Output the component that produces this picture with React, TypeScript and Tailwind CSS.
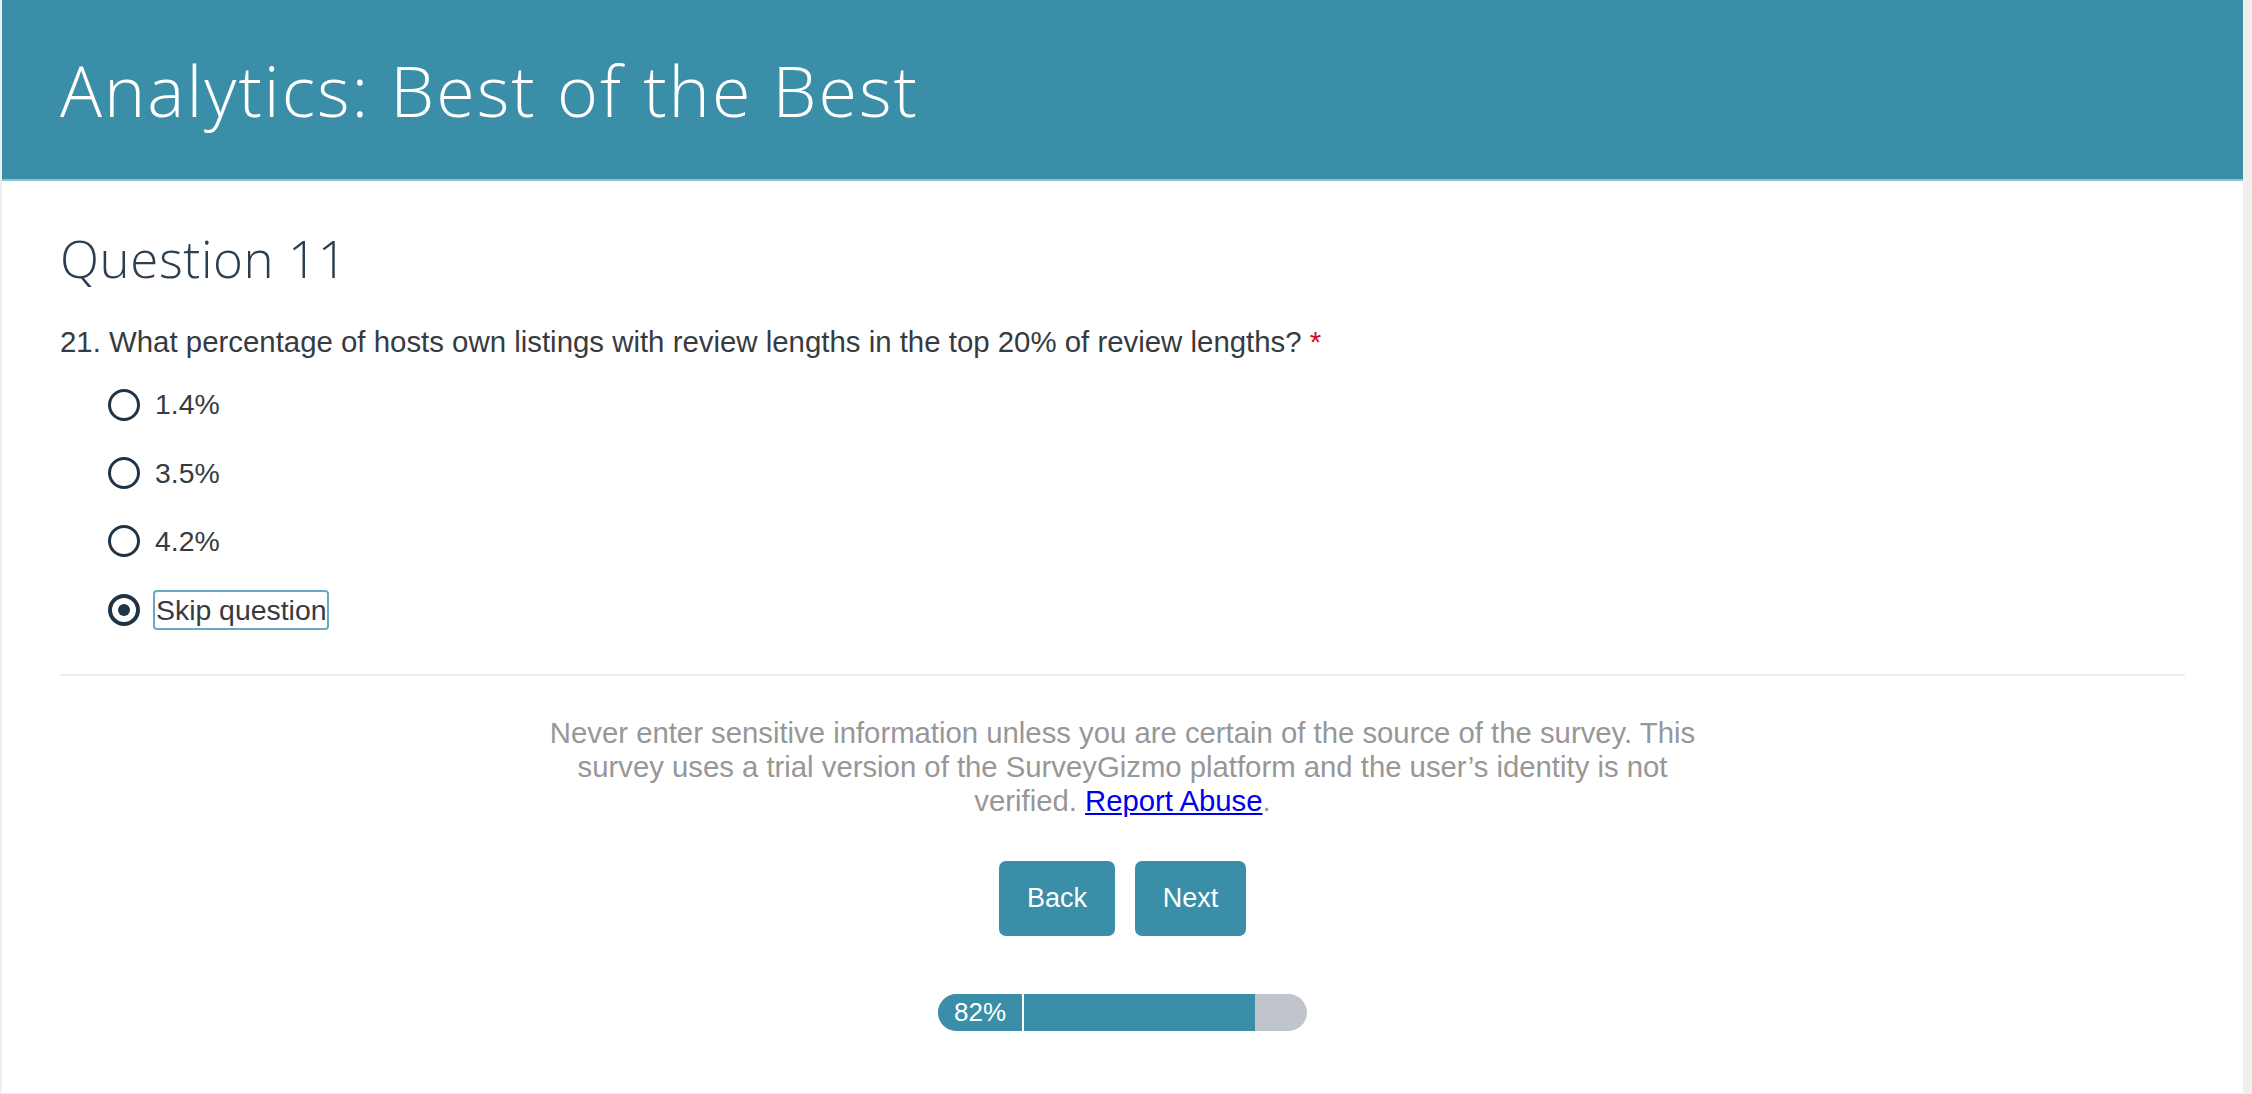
import React from "react";

const options = [
  { label: "1.4%", checked: false },
  { label: "3.5%", checked: false },
  { label: "4.2%", checked: false },
  { label: "Skip question", checked: true },
];

function Radio({ checked }: { checked: boolean }) {
  return (
    <span
      className={`flex h-[32px] w-[32px] shrink-0 items-center justify-center rounded-full border-[#1f3447] ${
        checked ? "border-[4px]" : "border-[3px]"
      }`}
    >
      {checked && <span className="h-[12px] w-[12px] rounded-full bg-[#1f3447]" />}
    </span>
  );
}

export default function App() {
  return (
    <div className="min-h-screen bg-[#efefef] font-['Liberation_Sans',Arial,sans-serif]">
      <div className="ml-[2px] flex h-[1093px] w-[2241px] flex-col bg-white">
        {/* header */}
        <header className="flex h-[181px] items-center border-b-2 border-[#8fc2d2] bg-[#3a8ea8] px-[58px]">
          <h1 className="font-['Open_Sans',sans-serif] text-[70px] font-light leading-none tracking-[2px] text-white">
            Analytics: Best of the Best
          </h1>
        </header>

        <main className="flex flex-col px-[58px]">
          <h2 className="mt-[52px] font-['Open_Sans',sans-serif] text-[51px] font-light leading-none tracking-[0.6px] text-[#2c3e50]">
            Question 11
          </h2>

          <p className="mt-[43px] text-[29.4px] leading-none text-[#363b41]">
            21. What percentage of hosts own listings with review lengths in the top 20% of review
            lengths? <span className="text-[#c8102e]">*</span>
          </p>

          <div className="mt-[30px] flex flex-col gap-[32px] pl-[48px]">
            {options.map((o) => (
              <label key={o.label} className="flex items-center gap-[15px] text-[28.4px] leading-none text-[#363b41]">
                <Radio checked={o.checked} />
                <span
                  className={
                    o.checked ? "rounded-[2px] px-[1px] py-[4px] outline-2 outline-[#6aaac0]" : "py-[4px]"
                  }
                >
                  {o.label}
                </span>
              </label>
            ))}
          </div>

          <hr className="mt-[46px] border-t-2 border-[#ececec]" />

          <p className="mx-auto mt-[40px] w-[1180px] text-center text-[29.3px] leading-[34px] text-[#979797]">
            Never enter sensitive information unless you are certain of the source of the survey. This
            survey uses a trial version of the SurveyGizmo platform and the user’s identity is not
            verified.{" "}
            <a href="#" className="text-[#0000ee] underline">
              Report Abuse
            </a>
            .
          </p>

          <div className="mt-[43px] flex justify-center gap-[20px]">
            <button className="h-[75px] w-[116px] rounded-[7px] bg-[#3a8ea8] text-[27px] text-white">
              Back
            </button>
            <button className="h-[75px] w-[111px] rounded-[7px] bg-[#3a8ea8] text-[27px] text-white">
              Next
            </button>
          </div>

          <div className="mx-auto mt-[58px] flex h-[37px] w-[369px] overflow-hidden rounded-full bg-[#c0c4cb]">
            <div className="flex w-[84px] items-center justify-center bg-[#3a8ea8] text-[26px] text-white">
              82%
            </div>
            <div className="w-[2px] bg-white" />
            <div className="w-[231px] bg-[#3a8ea8]" />
          </div>
        </main>
      </div>
    </div>
  );
}
